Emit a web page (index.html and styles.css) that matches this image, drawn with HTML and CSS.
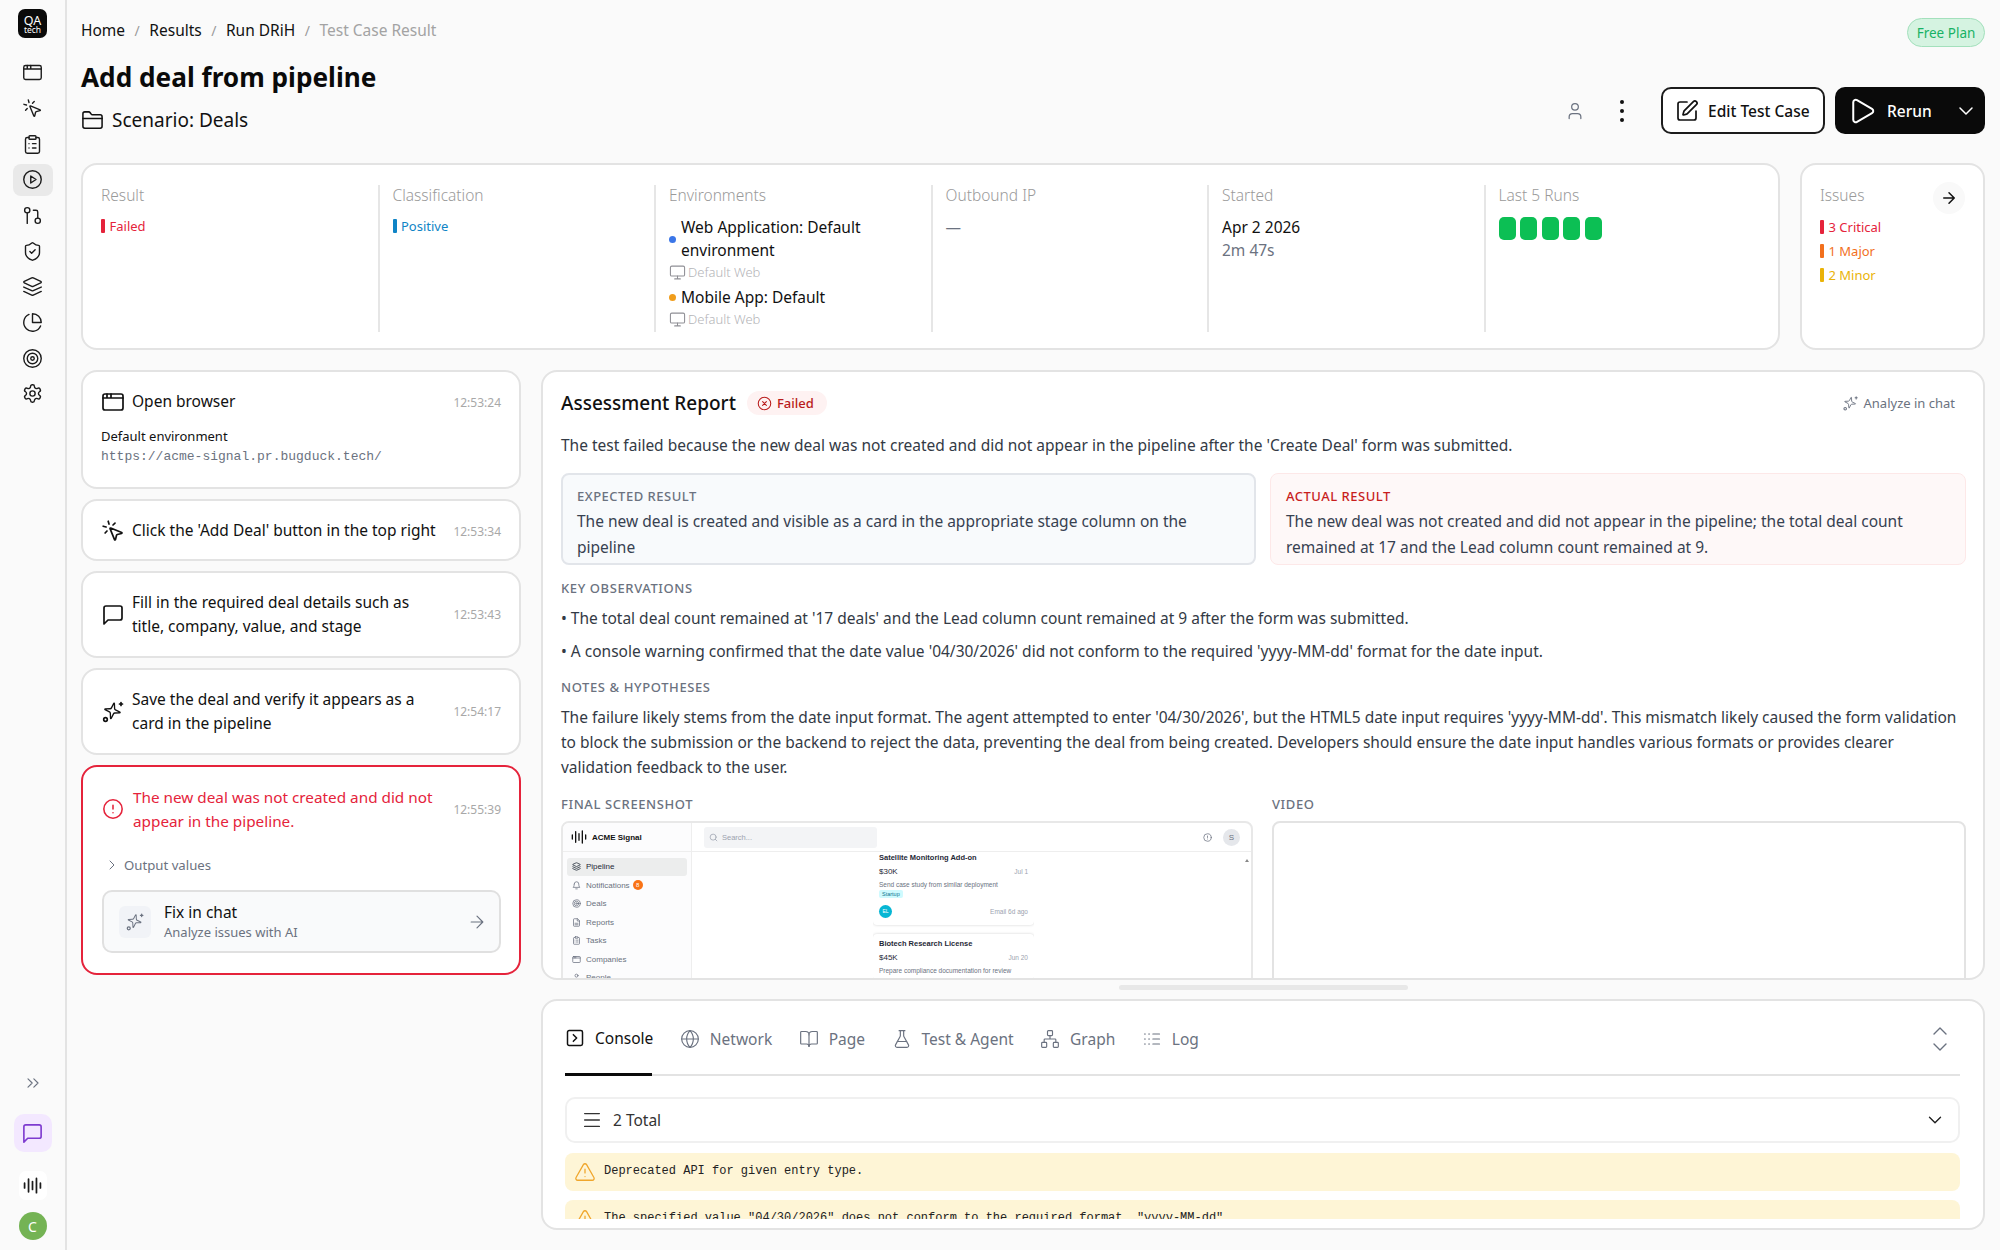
FILE: index.html
```html
<!DOCTYPE html>
<html lang="en">
<head>
    <meta charset="UTF-8">
    <meta name="viewport" content="width=device-width, initial-scale=1.0">
    <title>Test Case Result</title>
    <link rel="stylesheet" href="styles.css">
</head>
<body>
    <!-- icon sprite -->
    <svg class="sprite" xmlns="http://www.w3.org/2000/svg">
        <symbol id="i-window" viewBox="0 0 24 24"><rect x="2" y="4" width="20" height="16" rx="2"/><path d="M10 4v4M2 8h20M6 4v4"/></symbol>
        <symbol id="i-click" viewBox="0 0 24 24"><path d="M14 4.1 12 6M5.1 8l-2.9-.8M6 12l-1.9 2M7.2 2.2 8 5.1"/><path d="M9.037 9.69a.498.498 0 0 1 .653-.653l11 4.5a.5.5 0 0 1-.074.949l-4.349 1.041a1 1 0 0 0-.74.739l-1.04 4.35a.5.5 0 0 1-.95.074z"/></symbol>
        <symbol id="i-clipboard" viewBox="0 0 24 24"><rect x="8" y="2" width="8" height="4" rx="1"/><path d="M16 4h2a2 2 0 0 1 2 2v14a2 2 0 0 1-2 2H6a2 2 0 0 1-2-2V6a2 2 0 0 1 2-2h2"/><path d="M12 11h4M12 16h4M8 11h.01M8 16h.01"/></symbol>
        <symbol id="i-circle-play" viewBox="0 0 24 24"><circle cx="12" cy="12" r="10"/><polygon points="10 8 16 12 10 16 10 8"/></symbol>
        <symbol id="i-pull" viewBox="0 0 24 24"><circle cx="18" cy="18" r="3"/><circle cx="6" cy="6" r="3"/><path d="M13 6h3a2 2 0 0 1 2 2v7M6 9v12"/></symbol>
        <symbol id="i-shield" viewBox="0 0 24 24"><path d="M20 13c0 5-3.5 7.5-7.66 8.95a1 1 0 0 1-.67-.01C7.5 20.5 4 18 4 13V6a1 1 0 0 1 1-1c2 0 4.5-1.2 6.24-2.72a1.17 1.17 0 0 1 1.52 0C14.51 3.81 17 5 19 5a1 1 0 0 1 1 1z"/><path d="m9 12 2 2 4-4"/></symbol>
        <symbol id="i-layers" viewBox="0 0 24 24"><path d="M12.83 2.18a2 2 0 0 0-1.66 0L2.6 6.08a1 1 0 0 0 0 1.83l8.58 3.91a2 2 0 0 0 1.66 0l8.58-3.9a1 1 0 0 0 0-1.83Z"/><path d="m22 17.65-9.17 4.16a2 2 0 0 1-1.66 0L2 17.65"/><path d="m22 12.65-9.17 4.16a2 2 0 0 1-1.66 0L2 12.65"/></symbol>
        <symbol id="i-pie" viewBox="0 0 24 24"><path d="M21.21 15.89A10 10 0 1 1 8 2.83"/><path d="M22 12A10 10 0 0 0 12 2v10z"/></symbol>
        <symbol id="i-target" viewBox="0 0 24 24"><circle cx="12" cy="12" r="10"/><circle cx="12" cy="12" r="6"/><circle cx="12" cy="12" r="2"/></symbol>
        <symbol id="i-settings" viewBox="0 0 24 24"><path d="M12.22 2h-.44a2 2 0 0 0-2 2v.18a2 2 0 0 1-1 1.73l-.43.25a2 2 0 0 1-2 0l-.15-.08a2 2 0 0 0-2.73.73l-.22.38a2 2 0 0 0 .73 2.73l.15.1a2 2 0 0 1 1 1.72v.51a2 2 0 0 1-1 1.74l-.15.09a2 2 0 0 0-.73 2.73l.22.38a2 2 0 0 0 2.73.73l.15-.08a2 2 0 0 1 2 0l.43.25a2 2 0 0 1 1 1.73V20a2 2 0 0 0 2 2h.44a2 2 0 0 0 2-2v-.18a2 2 0 0 1 1-1.73l.43-.25a2 2 0 0 1 2 0l.15.08a2 2 0 0 0 2.73-.73l.22-.39a2 2 0 0 0-.73-2.73l-.15-.08a2 2 0 0 1-1-1.74v-.5a2 2 0 0 1 1-1.74l.15-.09a2 2 0 0 0 .73-2.73l-.22-.38a2 2 0 0 0-2.73-.73l-.15.08a2 2 0 0 1-2 0l-.43-.25a2 2 0 0 1-1-1.73V4a2 2 0 0 0-2-2z"/><circle cx="12" cy="12" r="3"/></symbol>
        <symbol id="i-chevrons" viewBox="0 0 24 24"><path d="m6 17 5-5-5-5M13 17l5-5-5-5"/></symbol>
        <symbol id="i-message" viewBox="0 0 24 24"><path d="M21 15a2 2 0 0 1-2 2H7l-4 4V5a2 2 0 0 1 2-2h14a2 2 0 0 1 2 2z"/></symbol>
        <symbol id="i-wave" viewBox="0 0 24 24"><path d="M2 9v6M7 4v16M12 7v10M17 3v18M22 9v6"/></symbol>
        <symbol id="i-folder" viewBox="0 0 24 24"><path d="M20 20a2 2 0 0 0 2-2V8a2 2 0 0 0-2-2h-7.9a2 2 0 0 1-1.69-.9L9.6 3.9A2 2 0 0 0 7.93 3H4a2 2 0 0 0-2 2v13a2 2 0 0 0 2 2Z"/><path d="M2 10h20"/></symbol>
        <symbol id="i-user" viewBox="0 0 24 24"><path d="M19 21v-2a4 4 0 0 0-4-4H9a4 4 0 0 0-4 4v2"/><circle cx="12" cy="7" r="4"/></symbol>
        <symbol id="i-pen" viewBox="0 0 24 24"><path d="M12 3H5a2 2 0 0 0-2 2v14a2 2 0 0 0 2 2h14a2 2 0 0 0 2-2v-7"/><path d="M18.375 2.625a1 1 0 0 1 3 3l-9.013 9.014a2 2 0 0 1-.853.505l-2.873.84a.5.5 0 0 1-.62-.62l.84-2.873a2 2 0 0 1 .506-.852z"/></symbol>
        <symbol id="i-play" viewBox="0 0 24 24"><path d="M5 5a2 2 0 0 1 3.008-1.728l11.997 6.998a2 2 0 0 1 .003 3.458l-12 7A2 2 0 0 1 5 19z"/></symbol>
        <symbol id="i-down" viewBox="0 0 24 24"><path d="m6 9 6 6 6-6"/></symbol>
        <symbol id="i-up" viewBox="0 0 24 24"><path d="m18 15-6-6-6 6"/></symbol>
        <symbol id="i-right" viewBox="0 0 24 24"><path d="m9 18 6-6-6-6"/></symbol>
        <symbol id="i-arrow" viewBox="0 0 24 24"><path d="M5 12h14M12 5l7 7-7 7"/></symbol>
        <symbol id="i-monitor" viewBox="0 0 24 24"><rect x="2" y="3" width="20" height="14" rx="2"/><path d="M8 21h8M12 17v4"/></symbol>
        <symbol id="i-sparkle" viewBox="0 0 24 24"><path transform="translate(1.5 2) rotate(12 12 12) scale(.78)" d="M9.937 15.5A2 2 0 0 0 8.5 14.063l-6.135-1.582a.5.5 0 0 1 0-.962L8.5 9.936A2 2 0 0 0 9.937 8.5l1.582-6.135a.5.5 0 0 1 .963 0L14.063 8.5A2 2 0 0 0 15.5 9.937l6.135 1.581a.5.5 0 0 1 0 .964L15.5 14.063a2 2 0 0 0-1.437 1.437l-1.582 6.135a.5.5 0 0 1-.963 0z"/><path d="M20 2.5v3M18.5 4h3"/><circle cx="4.5" cy="19.5" r="1.8"/></symbol>
        <symbol id="i-alert" viewBox="0 0 24 24"><circle cx="12" cy="12" r="10"/><path d="M12 8v4M12 16h.01"/></symbol>
        <symbol id="i-x-circle" viewBox="0 0 24 24"><circle cx="12" cy="12" r="10"/><path d="m15 9-6 6M9 9l6 6"/></symbol>
        <symbol id="i-terminal" viewBox="0 0 24 24"><rect x="3" y="3" width="18" height="18" rx="2"/><path d="m10 8 4 4-4 4"/></symbol>
        <symbol id="i-globe" viewBox="0 0 24 24"><circle cx="12" cy="12" r="10"/><path d="M12 2a14.5 14.5 0 0 0 0 20 14.5 14.5 0 0 0 0-20M2 12h20"/></symbol>
        <symbol id="i-book" viewBox="0 0 24 24"><path d="M12 7v14"/><path d="M3 18a1 1 0 0 1-1-1V4a1 1 0 0 1 1-1h5a4 4 0 0 1 4 4 4 4 0 0 1 4-4h5a1 1 0 0 1 1 1v13a1 1 0 0 1-1 1h-6a3 3 0 0 0-3 3 3 3 0 0 0-3-3z"/></symbol>
        <symbol id="i-flask" viewBox="0 0 24 24"><path d="M14 2v6a2 2 0 0 0 .245.96l5.51 10.08A2 2 0 0 1 18 22H6a2 2 0 0 1-1.755-2.96l5.51-10.08A2 2 0 0 0 10 8V2"/><path d="M6.453 15h11.094M8.5 2h7"/></symbol>
        <symbol id="i-network" viewBox="0 0 24 24"><rect x="16" y="16" width="6" height="6" rx="1"/><rect x="2" y="16" width="6" height="6" rx="1"/><rect x="9" y="2" width="6" height="6" rx="1"/><path d="M5 16v-3a1 1 0 0 1 1-1h12a1 1 0 0 1 1 1v3M12 12V8"/></symbol>
        <symbol id="i-logs" viewBox="0 0 24 24"><path d="M13 12h8M13 18h8M13 6h8M3 12h1M3 18h1M3 6h1M8 12h1M8 18h1M8 6h1"/></symbol>
        <symbol id="i-menu" viewBox="0 0 24 24"><path d="M4 5h16M4 12h16M4 19h16"/></symbol>
        <symbol id="i-warn" viewBox="0 0 24 24"><path d="m21.73 18-8-14a2 2 0 0 0-3.48 0l-8 14A2 2 0 0 0 4 21h16a2 2 0 0 0 1.73-3"/><path d="M12 9v4M12 17h.01"/></symbol>
        <symbol id="i-search" viewBox="0 0 24 24"><circle cx="11" cy="11" r="8"/><path d="m21 21-4.3-4.3"/></symbol>
        <symbol id="i-bell" viewBox="0 0 24 24"><path d="M6 8a6 6 0 0 1 12 0c0 7 3 9 3 9H3s3-2 3-9M10 21h4"/></symbol>
        <symbol id="i-file" viewBox="0 0 24 24"><path d="M14 2H6a2 2 0 0 0-2 2v16a2 2 0 0 0 2 2h12a2 2 0 0 0 2-2V8z"/><path d="M14 2v6h6M8 14h8M8 18h8"/></symbol>
    </svg>

    <div class="app">
        <nav class="sidebar">
            <svg class="logo" viewBox="0 0 29 29" xmlns="http://www.w3.org/2000/svg">
                <rect width="29" height="29" rx="7"/>
                <text class="logo-main" x="14.5" y="16">QA</text>
                <text class="logo-sub" x="14.5" y="24">tech</text>
            </svg>
            <div class="nav-list">
                <a class="nav-item"><svg class="icon"><use href="#i-window"/></svg></a>
                <a class="nav-item"><svg class="icon"><use href="#i-click"/></svg></a>
                <a class="nav-item"><svg class="icon"><use href="#i-clipboard"/></svg></a>
                <a class="nav-item active"><svg class="icon"><use href="#i-circle-play"/></svg></a>
                <a class="nav-item"><svg class="icon"><use href="#i-pull"/></svg></a>
                <a class="nav-item"><svg class="icon"><use href="#i-shield"/></svg></a>
                <a class="nav-item"><svg class="icon"><use href="#i-layers"/></svg></a>
                <a class="nav-item"><svg class="icon"><use href="#i-pie"/></svg></a>
                <a class="nav-item"><svg class="icon"><use href="#i-target"/></svg></a>
                <a class="nav-item"><svg class="icon"><use href="#i-settings"/></svg></a>
            </div>
            <div class="nav-bottom">
                <svg class="icon collapse"><use href="#i-chevrons"/></svg>
                <a class="chat-btn"><svg class="icon"><use href="#i-message"/></svg></a>
                <a class="wave-btn"><svg class="icon"><use href="#i-wave"/></svg></a>
                <div class="avatar">C</div>
            </div>
        </nav>

        <main class="main">
            <div class="topbar">
                <div class="breadcrumb">
                    <span>Home</span><i>/</i><span>Results</span><i>/</i><span>Run DRiH</span><i>/</i><span class="current">Test Case Result</span>
                </div>
                <span class="plan-badge">Free Plan</span>
            </div>

            <div class="title-row">
                <div class="title-block">
                    <h1>Add deal from pipeline</h1>
                    <div class="scenario"><svg class="icon"><use href="#i-folder"/></svg>Scenario: Deals</div>
                </div>
                <div class="actions">
                    <svg class="icon user-icon"><use href="#i-user"/></svg>
                    <div class="kebab"><b></b><b></b><b></b></div>
                    <button class="btn-edit"><svg class="icon"><use href="#i-pen"/></svg>Edit Test Case</button>
                    <button class="btn-rerun"><svg class="icon play"><use href="#i-play"/></svg>Rerun<svg class="icon caret"><use href="#i-down"/></svg></button>
                </div>
            </div>

            <div class="info-row">
                <section class="card info-card">
                    <div class="info-col">
                        <div class="info-label">Result</div>
                        <div class="tag tag-red">Failed</div>
                    </div>
                    <div class="info-col">
                        <div class="info-label">Classification</div>
                        <div class="tag tag-blue">Positive</div>
                    </div>
                    <div class="info-col">
                        <div class="info-label">Environments</div>
                        <div class="env-row"><span class="dot dot-blue"></span><span>Web Application: Default environment</span></div>
                        <div class="env-sub"><svg class="icon"><use href="#i-monitor"/></svg>Default Web</div>
                        <div class="env-row env-second"><span class="dot dot-orange"></span><span>Mobile App: Default</span></div>
                        <div class="env-sub"><svg class="icon"><use href="#i-monitor"/></svg>Default Web</div>
                    </div>
                    <div class="info-col">
                        <div class="info-label">Outbound IP</div>
                        <div class="info-value muted">—</div>
                    </div>
                    <div class="info-col">
                        <div class="info-label">Started</div>
                        <div class="info-value">Apr 2 2026</div>
                        <div class="info-sub">2m 47s</div>
                    </div>
                    <div class="info-col">
                        <div class="info-label">Last 5 Runs</div>
                        <div class="runs"><span></span><span></span><span></span><span></span><span></span></div>
                    </div>
                </section>
                <section class="card issues-card">
                    <div class="info-label">Issues</div>
                    <span class="round-btn"><svg class="icon"><use href="#i-arrow"/></svg></span>
                    <div class="tag tag-red">3 Critical</div>
                    <div class="tag tag-orange">1 Major</div>
                    <div class="tag tag-yellow">2 Minor</div>
                </section>
            </div>

            <div class="content-row">
                <div class="steps">
                    <div class="card step step-open">
                        <div class="step-head">
                            <svg class="icon"><use href="#i-window"/></svg>
                            <div class="step-text">Open browser</div>
                            <time>12:53:24</time>
                        </div>
                        <div class="step-env">Default environment</div>
                        <div class="step-url">https://acme-signal.pr.bugduck.tech/</div>
                    </div>
                    <div class="card step">
                        <div class="step-head">
                            <svg class="icon"><use href="#i-click"/></svg>
                            <div class="step-text">Click the 'Add Deal' button in the top right</div>
                            <time>12:53:34</time>
                        </div>
                    </div>
                    <div class="card step">
                        <div class="step-head">
                            <svg class="icon"><use href="#i-message"/></svg>
                            <div class="step-text">Fill in the required deal details such as title, company, value, and stage</div>
                            <time>12:53:43</time>
                        </div>
                    </div>
                    <div class="card step">
                        <div class="step-head">
                            <svg class="icon"><use href="#i-sparkle"/></svg>
                            <div class="step-text">Save the deal and verify it appears as a card in the pipeline</div>
                            <time>12:54:17</time>
                        </div>
                    </div>
                    <div class="card step step-error">
                        <div class="step-head">
                            <svg class="icon"><use href="#i-alert"/></svg>
                            <div class="step-text">The new deal was not created and did not appear in the pipeline.</div>
                            <time>12:55:39</time>
                        </div>
                        <div class="output-toggle"><svg class="icon"><use href="#i-right"/></svg>Output values</div>
                        <div class="fix-box">
                            <span class="fix-icon"><svg class="icon"><use href="#i-sparkle"/></svg></span>
                            <div class="fix-text">
                                <div class="fix-title">Fix in chat</div>
                                <div class="fix-sub">Analyze issues with AI</div>
                            </div>
                            <svg class="icon fix-arrow"><use href="#i-arrow"/></svg>
                        </div>
                    </div>
                </div>

                <div class="details">
                    <section class="card report">
                        <div class="report-head">
                            <h2>Assessment Report</h2>
                            <span class="status-badge"><svg class="icon"><use href="#i-x-circle"/></svg>Failed</span>
                            <span class="analyze"><svg class="icon"><use href="#i-sparkle"/></svg>Analyze in chat</span>
                        </div>
                        <p class="summary">The test failed because the new deal was not created and did not appear in the pipeline after the 'Create Deal' form was submitted.</p>
                        <div class="result-grid">
                            <div class="result-box expected">
                                <h4>Expected Result</h4>
                                <p>The new deal is created and visible as a card in the appropriate stage column on the pipeline</p>
                            </div>
                            <div class="result-box actual">
                                <h4>Actual Result</h4>
                                <p>The new deal was not created and did not appear in the pipeline; the total deal count remained at 17 and the Lead column count remained at 9.</p>
                            </div>
                        </div>
                        <h4 class="section-title">Key Observations</h4>
                        <p class="bullet">• The total deal count remained at '17 deals' and the Lead column count remained at 9 after the form was submitted.</p>
                        <p class="bullet">• A console warning confirmed that the date value '04/30/2026' did not conform to the required 'yyyy-MM-dd' format for the date input.</p>
                        <h4 class="section-title notes-title">Notes &amp; Hypotheses</h4>
                        <p class="notes">The failure likely stems from the date input format. The agent attempted to enter '04/30/2026', but the HTML5 date input requires 'yyyy-MM-dd'. This mismatch likely caused the form validation to block the submission or the backend to reject the data, preventing the deal from being created. Developers should ensure the date input handles various formats or provides clearer validation feedback to the user.</p>
                        <div class="media-grid">
                            <div class="media-col">
                                <h4 class="section-title">Final Screenshot</h4>
                                <div class="shot">
                                    <div class="shot-side">
                                        <div class="shot-brand"><svg class="icon"><use href="#i-wave"/></svg>ACME Signal</div>
                                        <div class="shot-nav">
                                            <div class="shot-link selected"><svg class="icon"><use href="#i-layers"/></svg>Pipeline</div>
                                            <div class="shot-link"><svg class="icon"><use href="#i-bell"/></svg>Notifications<em>8</em></div>
                                            <div class="shot-link"><svg class="icon"><use href="#i-target"/></svg>Deals</div>
                                            <div class="shot-link"><svg class="icon"><use href="#i-file"/></svg>Reports</div>
                                            <div class="shot-link"><svg class="icon"><use href="#i-clipboard"/></svg>Tasks</div>
                                            <div class="shot-link"><svg class="icon"><use href="#i-window"/></svg>Companies</div>
                                            <div class="shot-link"><svg class="icon"><use href="#i-user"/></svg>People</div>
                                        </div>
                                    </div>
                                    <div class="shot-main">
                                        <div class="shot-top">
                                            <div class="shot-search"><svg class="icon"><use href="#i-search"/></svg>Search...</div>
                                            <svg class="icon shot-help"><use href="#i-alert"/></svg>
                                            <span class="shot-user">S</span>
                                        </div>
                                        <span class="shot-scroll"></span>
                                        <div class="shot-board">
                                            <div class="deal deal-first">
                                                <div class="deal-name">Satellite Monitoring Add-on</div>
                                                <div class="deal-line"><span>$30K</span><small>Jul 1</small></div>
                                                <div class="deal-note">Send case study from similar deployment</div>
                                                <span class="deal-tag">Startup</span>
                                                <div class="deal-line deal-foot"><span class="deal-av">EL</span><small>Email 6d ago</small></div>
                                            </div>
                                            <div class="deal">
                                                <div class="deal-name">Biotech Research License</div>
                                                <div class="deal-line"><span>$45K</span><small>Jun 20</small></div>
                                                <div class="deal-note">Prepare compliance documentation for review</div>
                                            </div>
                                        </div>
                                    </div>
                                </div>
                            </div>
                            <div class="media-col">
                                <h4 class="section-title">Video</h4>
                                <div class="video"></div>
                            </div>
                        </div>
                    </section>

                    <div class="resize-handle"></div>

                    <section class="card console">
                        <div class="tabs">
                            <a class="tab active"><svg class="icon"><use href="#i-terminal"/></svg>Console</a>
                            <a class="tab"><svg class="icon"><use href="#i-globe"/></svg>Network</a>
                            <a class="tab"><svg class="icon"><use href="#i-book"/></svg>Page</a>
                            <a class="tab"><svg class="icon"><use href="#i-flask"/></svg>Test &amp; Agent</a>
                            <a class="tab"><svg class="icon"><use href="#i-network"/></svg>Graph</a>
                            <a class="tab"><svg class="icon"><use href="#i-logs"/></svg>Log</a>
                            <span class="tab-toggle">
                                <svg class="icon"><use href="#i-up"/></svg>
                                <svg class="icon"><use href="#i-down"/></svg>
                            </span>
                        </div>
                        <div class="filter">
                            <svg class="icon"><use href="#i-menu"/></svg>
                            <span>2 Total</span>
                            <svg class="icon filter-caret"><use href="#i-down"/></svg>
                        </div>
                        <div class="log-list">
                            <div class="log-row"><svg class="icon"><use href="#i-warn"/></svg>Deprecated API for given entry type.</div>
                            <div class="log-row"><svg class="icon"><use href="#i-warn"/></svg>The specified value "04/30/2026" does not conform to the required format, "yyyy-MM-dd".</div>
                        </div>
                    </section>
                </div>
            </div>
        </main>
    </div>
</body>
</html>
```

FILE: styles.css
```css
/* General styling */
* {
    box-sizing: border-box;
}

html, body {
    height: 100%;
}

body {
    margin: 0;
    font-family: 'Noto Sans', sans-serif;
    font-size: 15.5px;
    color: #111;
    background-color: #fafafa;
    overflow: hidden;
}

h1, h2, h4, p {
    margin: 0;
}

.sprite {
    display: none;
}

.icon {
    width: 24px;
    height: 24px;
    flex: none;
    fill: none;
    stroke: currentColor;
    stroke-width: 1.7;
    stroke-linecap: round;
    stroke-linejoin: round;
}

.app {
    display: flex;
    height: 1250px;
}

/* Sidebar */
.sidebar {
    width: 67px;
    flex: none;
    display: flex;
    flex-direction: column;
    align-items: center;
    padding: 9px 0 10px;
    border-right: 2px solid #e3e3e3;
}

.logo {
    width: 29px;
    height: 29px;
    flex: none;
    fill: #0a0a0a;
}

.logo text {
    fill: #fff;
    text-anchor: middle;
    font-family: 'Noto Sans', sans-serif;
}

.logo-main {
    font-size: 12.5px;
}

.logo-sub {
    font-size: 8.5px;
}

.nav-list {
    margin-top: 18.7px;
    display: flex;
    flex-direction: column;
    gap: 3.7px;
}

.nav-item {
    width: 40px;
    height: 32px;
    border-radius: 8px;
    display: flex;
    align-items: center;
    justify-content: center;
    color: #1c1c1c;
}

.nav-item .icon {
    width: 21px;
    height: 21px;
    stroke-width: 1.6;
}

.nav-item.active {
    background: #e9e9e9;
}

.nav-bottom {
    margin-top: auto;
    display: flex;
    flex-direction: column;
    align-items: center;
}

.collapse {
    width: 20px;
    height: 20px;
    stroke-width: 1.4;
    color: #6b7280;
}

.chat-btn {
    margin-top: 21px;
    width: 38px;
    height: 38px;
    border-radius: 10px;
    background: #f3e8ff;
    color: #7e3bd0;
    display: flex;
    align-items: center;
    justify-content: center;
}

.chat-btn .icon {
    width: 23px;
    height: 23px;
}

.wave-btn {
    margin-top: 19px;
    width: 28px;
    height: 29px;
    border-radius: 7px;
    background: #fff;
    color: #1c1c1c;
    display: flex;
    align-items: center;
    justify-content: center;
}

.wave-btn .icon {
    width: 19px;
    height: 19px;
    stroke-width: 2.2;
}

.avatar {
    margin-top: 12px;
    width: 28px;
    height: 28px;
    border-radius: 50%;
    background: #74b354;
    color: #fff;
    font-size: 14px;
    display: flex;
    align-items: center;
    justify-content: center;
}

/* Main */
.main {
    flex: 1;
    min-width: 0;
    padding: 0 15px 0 14px;
}

.topbar {
    height: 47px;
    padding-top: 18px;
    display: flex;
    justify-content: space-between;
    align-items: flex-start;
}

.breadcrumb {
    display: flex;
    align-items: center;
    height: 24px;
}

.breadcrumb i {
    margin: 0 9.5px;
    font-style: normal;
    color: #9a9a9a;
    font-size: 14px;
}

.breadcrumb .current {
    color: #a3a3a3;
}

.plan-badge {
    width: 78px;
    height: 29px;
    border-radius: 15px;
    border: 1px solid #a3e0bc;
    background: #d5f3e1;
    color: #17b265;
    font-size: 13.5px;
    display: flex;
    align-items: center;
    justify-content: center;
}

.title-row {
    height: 116px;
    display: flex;
    justify-content: space-between;
}

.title-block h1 {
    margin-top: 10px;
    font-size: 26.2px;
    line-height: 40px;
    font-weight: 700;
    color: #0a0a0a;
}

.scenario {
    margin-top: 11px;
    display: flex;
    align-items: center;
    gap: 8px;
    font-size: 19px;
    line-height: 24px;
}

.scenario .icon {
    width: 23px;
    height: 23px;
    stroke-width: 1.6;
}

.actions {
    margin-top: 40px;
    height: 47px;
    display: flex;
    align-items: center;
}

.user-icon {
    color: #6b7280;
    width: 20px;
    height: 20px;
    stroke-width: 1.5;
}

.kebab {
    margin-left: 35px;
    width: 4px;
    display: flex;
    flex-direction: column;
    gap: 5px;
}

.kebab b {
    width: 4px;
    height: 4px;
    border-radius: 50%;
    background: #111;
}

button {
    font-family: inherit;
    font-size: 15.5px;
    height: 47px;
    border-radius: 10px;
    display: flex;
    align-items: center;
    white-space: nowrap;
    cursor: pointer;
}

.btn-edit {
    margin-left: 37px;
    width: 164px;
    padding: 0 12px;
    gap: 9px;
    background: #fff;
    color: #111;
    border: 2px solid #1c1c1c;
    font-weight: 500;
}

.btn-rerun {
    margin-left: 10px;
    width: 150px;
    padding: 0 7px 0 12px;
    background: #0a0a0a;
    color: #fff;
    border: none;
    font-weight: 500;
}

.btn-rerun .play {
    width: 30px;
    height: 30px;
    stroke-width: 1.6;
    margin-right: 10px;
}

.btn-rerun .caret {
    margin-left: auto;
    stroke-width: 1.5;
}

/* Cards */
.card {
    background: #fff;
    border: 2px solid #e3e3e3;
    border-radius: 16px;
}

.info-row {
    display: flex;
    gap: 20px;
    height: 187px;
}

.info-card {
    flex: 1;
    display: grid;
    grid-template-columns: repeat(6, 1fr);
    padding: 18px;
    height: 187px;
}

.info-col {
    padding: 0 13px;
    border-left: 2px solid #e6e6e6;
    height: 147px;
    margin-top: 2px;
    overflow: hidden;
}

.info-col:first-child {
    padding-left: 0;
    border-left: none;
}

.info-label {
    line-height: 24px;
    margin-top: -2px;
    color: #9a9a9a;
    font-weight: 300;
}

.tag {
    font-size: 13px;
    line-height: 16px;
    margin-top: 11px;
    padding-left: 8.5px;
    position: relative;
}

.tag::before {
    content: "";
    position: absolute;
    left: 0;
    top: 1px;
    width: 4px;
    height: 14px;
    border-radius: 1px;
    background: currentColor;
}

.tag-red { color: #e5233b; }
.tag-blue { color: #0f84c6; }
.tag-orange { color: #f2701d; }
.tag-yellow { color: #eab308; }

.env-row {
    display: flex;
    align-items: center;
    gap: 5px;
    margin-top: 9px;
    line-height: 23px;
    color: #111;
}

.env-second {
    margin-top: 4px;
}

.dot {
    width: 7px;
    height: 7px;
    flex: none;
    border-radius: 50%;
}

.dot-blue { background: #3b76e8; }
.dot-orange { background: #f09d1c; }

.env-sub {
    display: flex;
    align-items: center;
    gap: 2px;
    font-size: 13px;
    line-height: 20px;
    color: #b4b4b8;
    font-weight: 300;
}

.env-sub .icon {
    width: 17px;
    height: 17px;
    stroke-width: 1.5;
    color: #8f8f95;
}

.info-value {
    margin-top: 9px;
    line-height: 23px;
}

.info-value.muted {
    color: #6b7280;
}

.info-sub {
    color: #6b7280;
    line-height: 22px;
}

.runs {
    margin-top: 10px;
    display: flex;
    gap: 4.5px;
}

.runs span {
    width: 17px;
    height: 23px;
    border-radius: 5px;
    background: #0cbf54;
}

.issues-card {
    width: 185px;
    flex: none;
    padding: 18px;
    position: relative;
}

.issues-card .tag {
    margin-top: 8px;
}

.issues-card .info-label {
    margin: 0 0 12px;
}

.round-btn {
    position: absolute;
    top: 17px;
    right: 18px;
    width: 32px;
    height: 32px;
    border-radius: 50%;
    background: #f9f9f9;
    display: flex;
    align-items: center;
    justify-content: center;
}

.round-btn .icon {
    width: 18px;
    height: 18px;
    stroke-width: 2;
}

.content-row {
    margin-top: 20px;
    display: flex;
    gap: 20px;
}

/* Steps */
.steps {
    width: 440px;
    flex: none;
    display: flex;
    flex-direction: column;
    gap: 10px;
}

.step {
    padding: 18px;
}

.step-head {
    display: flex;
    align-items: center;
    gap: 7px;
    min-height: 24px;
}

.step-text {
    flex: 1;
    line-height: 23.5px;
    margin-right: 8px;
}

.step time {
    font-size: 12px;
    color: #a8a8a8;
}

.step-open {
    height: 119px;
}

.step-env {
    margin-top: 11.5px;
    font-size: 13px;
    line-height: 20px;
}

.step-url {
    margin-top: 1.5px;
    font-family: 'Liberation Mono', monospace;
    font-size: 13px;
    line-height: 20px;
    color: #6b7280;
}

.step:nth-child(2) { height: 62px; }
.step:nth-child(3) { height: 87px; padding-top: 18px; }
.step:nth-child(4) { height: 87px; }

.step-error {
    height: 210px;
    border-color: #e5233b;
    color: #e5233b;
}

.step-error .step-head {
    padding-left: 1px;
    gap: 9px;
}

.step-error .step-head .icon {
    width: 22px;
    height: 22px;
}

.step-error .step-text {
    padding-top: 1px;
    margin-right: 0;
    font-size: 15.3px;
}

.output-toggle {
    margin-top: 22px;
    padding-left: 3px;
    display: flex;
    align-items: center;
    gap: 4px;
    font-size: 13.2px;
    line-height: 20px;
    color: #6b7280;
}

.output-toggle .icon {
    width: 16px;
    height: 16px;
    stroke-width: 1.5;
}

.fix-box {
    margin-top: 15px;
    margin-left: 1px;
    height: 63px;
    padding: 0 12px 0 15px;
    display: flex;
    align-items: center;
    gap: 13px;
    background: #f9fafb;
    border: 2px solid #e0e0e0;
    border-radius: 10px;
    color: #6b7280;
}

.fix-icon {
    width: 32px;
    height: 32px;
    border-radius: 6px;
    background: #f1f3f7;
    display: flex;
    align-items: center;
    justify-content: center;
}

.fix-icon .icon {
    width: 20px;
    height: 20px;
    stroke-width: 1.5;
}

.fix-text {
    flex: 1;
}

.fix-title {
    color: #111;
    line-height: 21px;
}

.fix-sub {
    font-size: 13px;
    line-height: 18px;
}

.fix-arrow {
    width: 20px;
    height: 20px;
    stroke-width: 1.4;
}

/* Assessment report */
.details {
    flex: 1;
    min-width: 0;
}

.report {
    height: 610px;
    padding: 16px 18px 0;
    overflow: hidden;
}

.report-head {
    display: flex;
    align-items: center;
    height: 30px;
}

.report-head h2 {
    font-size: 19px;
    font-weight: 500;
    color: #111;
}

.status-badge {
    margin-left: 11px;
    height: 24px;
    padding: 0 13px 0 10px;
    border-radius: 12px;
    background: #fef2f2;
    color: #b91c1c;
    font-size: 13px;
    font-weight: 500;
    display: flex;
    align-items: center;
    gap: 5px;
}

.status-badge .icon {
    width: 15px;
    height: 15px;
}

.analyze {
    margin-left: auto;
    margin-right: 10px;
    font-size: 13px;
    color: #6b7280;
    display: flex;
    align-items: center;
    gap: 5px;
}

.analyze .icon {
    width: 17px;
    height: 17px;
    stroke-width: 1.5;
}

.summary {
    margin-top: 15px;
    line-height: 25px;
    color: #333a45;
}

.result-grid {
    margin-top: 15px;
    display: grid;
    grid-template-columns: 695px 696px;
    grid-auto-rows: 92px;
    gap: 14px;
}

.result-box {
    padding: 11px 14px 0;
    border-radius: 8px;
    border: 2px solid #e2e5ea;
    background: #f8fafc;
    color: #374151;
}

.result-box h4 {
    font-size: 13px;
    font-weight: 500;
    line-height: 20px;
    text-transform: uppercase;
    letter-spacing: 0.5px;
    color: #6b7280;
}

.result-box p {
    line-height: 25.5px;
    margin-top: 3px;
}

.result-box.actual {
    background: #fef8f8;
    border: 1px solid #fde8e8;
    padding: 12px 15px 0;
}

.result-box.actual h4 {
    color: #c81e1e;
}

.section-title {
    font-size: 13px;
    font-weight: 500;
    line-height: 20px;
    text-transform: uppercase;
    letter-spacing: 0.6px;
    color: #6b7280;
}

.result-grid + .section-title {
    margin-top: 13px;
}

.bullet {
    margin-top: 8px;
    line-height: 25px;
    color: #333a45;
}

.notes-title {
    margin-top: 13px;
}

.notes {
    margin-top: 8px;
    line-height: 25px;
    color: #333a45;
}

.media-grid {
    margin-top: 14px;
    display: grid;
    grid-template-columns: 692px 694px;
    gap: 19px;
}

.media-col .section-title {
    margin-bottom: 7px;
}

.video {
    height: 170px;
    border: 2px solid #e3e3e3;
    border-radius: 8px;
}

/* Final screenshot thumbnail */
.shot {
    height: 170px;
    border: 2px solid #e8e8e8;
    border-radius: 8px;
    display: flex;
    overflow: hidden;
    font-family: 'Liberation Sans', sans-serif;
    font-size: 8px;
    color: #6b7280;
}

.shot .icon {
    width: 9px;
    height: 9px;
    stroke-width: 2;
}

.shot-side {
    width: 129px;
    flex: none;
    border-right: 1px solid #eee;
    background: #fcfcfd;
}

.shot-brand {
    height: 29px;
    display: flex;
    align-items: center;
    gap: 5px;
    padding-left: 8px;
    border-bottom: 1px solid #eee;
    color: #111;
    font-size: 8px;
    font-weight: 700;
}

.shot .shot-brand .icon {
    width: 16px;
    height: 16px;
}

.shot-nav {
    padding: 6px 4px;
    display: flex;
    flex-direction: column;
    gap: 1px;
}

.shot-link {
    height: 17.5px;
    display: flex;
    align-items: center;
    gap: 5px;
    padding-left: 5px;
}

.shot-link.selected {
    background: #eceded;
    border-radius: 3px;
    color: #1f2937;
}

.shot-link em {
    width: 10px;
    height: 10px;
    border-radius: 50%;
    background: #f97316;
    color: #fff;
    font-style: normal;
    font-size: 6px;
    text-align: center;
    line-height: 10px;
    margin-left: -2px;
}

.shot-main {
    flex: 1;
    min-width: 0;
    position: relative;
}

.shot-top {
    height: 29px;
    display: flex;
    align-items: center;
    padding: 0 11px 0 12px;
    border-bottom: 1px solid #eee;
}

.shot-search {
    width: 173px;
    height: 21px;
    border-radius: 3px;
    background: #f3f4f6;
    display: flex;
    align-items: center;
    gap: 4px;
    padding-left: 5px;
    color: #9ca3af;
    font-size: 7.5px;
}

.shot-help {
    margin-left: auto;
}

.shot-user {
    margin-left: 11px;
    width: 17px;
    height: 17px;
    border-radius: 50%;
    background: #e5e7eb;
    text-align: center;
    line-height: 17px;
}

/* little scrollbar arrow in the thumbnail */
.shot-scroll {
    position: absolute;
    top: 36px;
    right: 2px;
    border: 2px solid transparent;
    border-top: none;
    border-bottom: 3px solid #888;
}

.shot-board {
    width: 161px;
    margin-left: 181px;
    height: 130px;
    overflow: hidden;
}

.deal {
    background: #fff;
    box-shadow: 0 0 3px rgba(0, 0, 0, 0.18);
    border-radius: 4px;
    padding: 4px 6px;
    margin-bottom: 9px;
    font-size: 7px;
}

.deal-first {
    padding-top: 0;
    height: 73px;
    border-top-left-radius: 0;
    border-top-right-radius: 0;
}

.deal-name {
    font-size: 7.5px;
    font-weight: 700;
    color: #1f2937;
    line-height: 11px;
}

.deal-line {
    display: flex;
    justify-content: space-between;
    align-items: center;
    font-size: 8px;
    color: #1f2937;
    line-height: 12px;
    margin-top: 3px;
}

.deal-line small {
    font-size: 6.5px;
    color: #9ca3af;
}

.deal-note {
    font-size: 6.5px;
    line-height: 10px;
    margin-top: 2px;
}

.deal-tag {
    display: inline-block;
    background: #cffafe;
    color: #0e7490;
    font-size: 5.5px;
    padding: 0 3px;
    line-height: 8px;
    border-radius: 2px;
}

.deal-foot {
    margin-top: 7px;
}

.deal-av {
    width: 13px;
    height: 13px;
    border-radius: 50%;
    background: #06b6d4;
    color: #fff;
    font-size: 5px;
    text-align: center;
    line-height: 13px;
}

.resize-handle {
    width: 289px;
    height: 5px;
    margin: 5px auto 0;
    background: #e8e8e8;
    border-radius: 3px;
}

/* Console panel */
.console {
    margin-top: 9px;
    height: 231px;
    padding: 0 23px 10px 22px;
    overflow: hidden;
}

.tabs {
    height: 75px;
    display: flex;
    align-items: center;
    border-bottom: 2px solid #e3e3e3;
    padding-top: 2px;
    position: relative;
}

.tab {
    display: flex;
    align-items: center;
    gap: 10px;
    margin-left: 26.5px;
    color: #6b7280;
    line-height: 24px;
}

.tab .icon {
    width: 20px;
    height: 20px;
    stroke-width: 1.4;
}

.tab:first-child {
    margin-left: 0;
}

.tab.active {
    color: #111;
    margin-top: -2px;
}

.tab.active .icon {
    stroke-width: 1.8;
}

/* the underline sits over the tab row's border */
.tab.active::after {
    content: "";
    position: absolute;
    left: 0;
    bottom: -2px;
    width: 87px;
    height: 3px;
    background: #0a0a0a;
}

.tab-toggle {
    margin-left: auto;
    margin-right: 8px;
    display: flex;
    flex-direction: column;
    color: #6b7280;
}

.tab-toggle .icon {
    width: 24px;
    height: 24px;
    margin: -4px 0;
    stroke-width: 1.4;
}

.filter {
    margin-top: 21px;
    height: 46px;
    display: flex;
    align-items: center;
    gap: 10px;
    padding: 0 12px 0 14px;
    border: 2px solid #f0f0f0;
    border-radius: 10px;
    color: #333;
}

.filter .icon {
    width: 22px;
    height: 22px;
    stroke-width: 1.5;
}

.filter-caret {
    margin-left: auto;
    color: #222;
}

.log-list {
    margin-top: 10px;
    height: 66px;
    overflow: hidden;
}

.log-row {
    height: 38px;
    margin-bottom: 9px;
    padding: 9px 0 0 9px;
    display: flex;
    align-items: flex-start;
    gap: 8px;
    background: #fef5d6;
    border-radius: 8px;
    font-family: 'Liberation Mono', monospace;
    font-size: 12px;
    line-height: 18px;
    color: #222;
}

.log-row .icon {
    width: 22px;
    height: 22px;
    margin-top: -1px;
    stroke-width: 1.4;
    color: #f0a62c;
}
```
